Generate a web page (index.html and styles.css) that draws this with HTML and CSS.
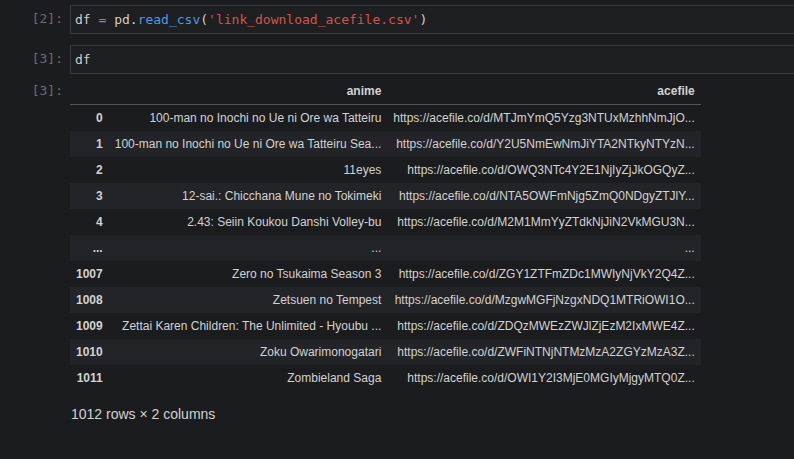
FILE: index.html
```html
<!DOCTYPE html>
<html>
<head>
<meta charset="utf-8">
<link rel="stylesheet" href="styles.css">
</head>
<body>
<div class="notebook">
  <div class="cell code-cell first">
    <div class="prompt">[2]:</div>
    <div class="input"><span class="v">df</span> <span class="op">=</span> <span class="v">pd</span><span class="v">.</span><span class="fn">read_csv</span><span class="v">(</span><span class="str">'link_download_acefile.csv'</span><span class="v">)</span></div>
  </div>
  <div class="cell code-cell">
    <div class="prompt">[3]:</div>
    <div class="input"><span class="v">df</span></div>
  </div>
  <div class="cell output-cell">
    <div class="prompt out-prompt">[3]:</div>
    <div class="output">
      <table class="df">
        <thead>
          <tr><th></th><th>anime</th><th>acefile</th></tr>
        </thead>
        <tbody>
          <tr><th>0</th><td>100-man no Inochi no Ue ni Ore wa Tatteiru</td><td>https://acefile.co/d/MTJmYmQ5Yzg3NTUxMzhhNmJjO...</td></tr>
          <tr><th>1</th><td>100-man no Inochi no Ue ni Ore wa Tatteiru Sea...</td><td>https://acefile.co/d/Y2U5NmEwNmJiYTA2NTkyNTYzN...</td></tr>
          <tr><th>2</th><td>11eyes</td><td>https://acefile.co/d/OWQ3NTc4Y2E1NjIyZjJkOGQyZ...</td></tr>
          <tr><th>3</th><td>12-sai.: Chicchana Mune no Tokimeki</td><td>https://acefile.co/d/NTA5OWFmNjg5ZmQ0NDgyZTJlY...</td></tr>
          <tr><th>4</th><td>2.43: Seiin Koukou Danshi Volley-bu</td><td>https://acefile.co/d/M2M1MmYyZTdkNjJiN2VkMGU3N...</td></tr>
          <tr><th>...</th><td>...</td><td>...</td></tr>
          <tr><th>1007</th><td>Zero no Tsukaima Season 3</td><td>https://acefile.co/d/ZGY1ZTFmZDc1MWIyNjVkY2Q4Z...</td></tr>
          <tr><th>1008</th><td>Zetsuen no Tempest</td><td>https://acefile.co/d/MzgwMGFjNzgxNDQ1MTRiOWI1O...</td></tr>
          <tr><th>1009</th><td>Zettai Karen Children: The Unlimited - Hyoubu ...</td><td>https://acefile.co/d/ZDQzMWEzZWJlZjEzM2IxMWE4Z...</td></tr>
          <tr><th>1010</th><td>Zoku Owarimonogatari</td><td>https://acefile.co/d/ZWFiNTNjNTMzMzA2ZGYzMzA3Z...</td></tr>
          <tr><th>1011</th><td>Zombieland Saga</td><td>https://acefile.co/d/OWI1Y2I3MjE0MGIyMjgyMTQ0Z...</td></tr>
        </tbody>
      </table>
      <p class="shape">1012 rows × 2 columns</p>
    </div>
  </div>
  <div class="cell code-cell active">
    <div class="prompt">[ ]:</div>
    <div class="input"></div>
  </div>
</div>
</body>
</html>
```

FILE: styles.css
```css
html, body {
  margin: 0;
  padding: 0;
  background: #1b1c1e;
  overflow: hidden;
  height: 100%;
}

.notebook {
  width: 840px;
  padding-top: 5px;
  display: flex;
  flex-direction: column;
  gap: 11px;
}

.cell {
  display: flex;
  align-items: flex-start;
  position: relative;
}

.prompt {
  width: 63px;
  flex: 0 0 63px;
  padding-right: 7px;
  text-align: right;
  font-family: "DejaVu Sans Mono", monospace;
  font-size: 13px;
  color: #6b6c6e;
  line-height: 27px;
}

.input {
  flex: 1;
  border: 1px solid #3b3c3f;
  background: #1e1f21;
  height: 27px;
  line-height: 27px;
  padding-left: 4px;
  font-family: "DejaVu Sans Mono", monospace;
  font-size: 13px;
  color: #cfcfcf;
  white-space: pre;
}

.v { color: #cfcfcf; }
.op { color: #b75ce8; }
.fn { color: #4c9be8; }
.str { color: #d6534b; }

.output-cell {
  margin-top: -7px;
}

.out-prompt {
  line-height: 26px;
}

.output {
  flex: 1;
  font-family: "Liberation Sans", Arial, sans-serif;
  color: #d2d2d2;
}

table.df {
  border-collapse: collapse;
  border-spacing: 0;
  font-size: 12px;
}

table.df th,
table.df td {
  text-align: right;
  padding: 6px 6px;
  line-height: 14px;
  white-space: nowrap;
  color: #d2d2d2;
}

table.df th {
  font-weight: bold;
}

table.df thead th {
  border-bottom: 1px solid #545557;
}

table.df tbody tr:nth-child(even) {
  background: #232427;
}

.shape {
  margin: 15px 0 0 1px;
  font-size: 14px;
  color: #d2d2d2;
  line-height: 16px;
}

.active {
  margin-top: 29px;
}

.active::before {
  content: "";
  position: absolute;
  left: 0;
  top: 0;
  width: 6px;
  height: 40px;
  background: #1e6fbd;
}

.active .input {
  border-color: #1e6fbd;
}
```
